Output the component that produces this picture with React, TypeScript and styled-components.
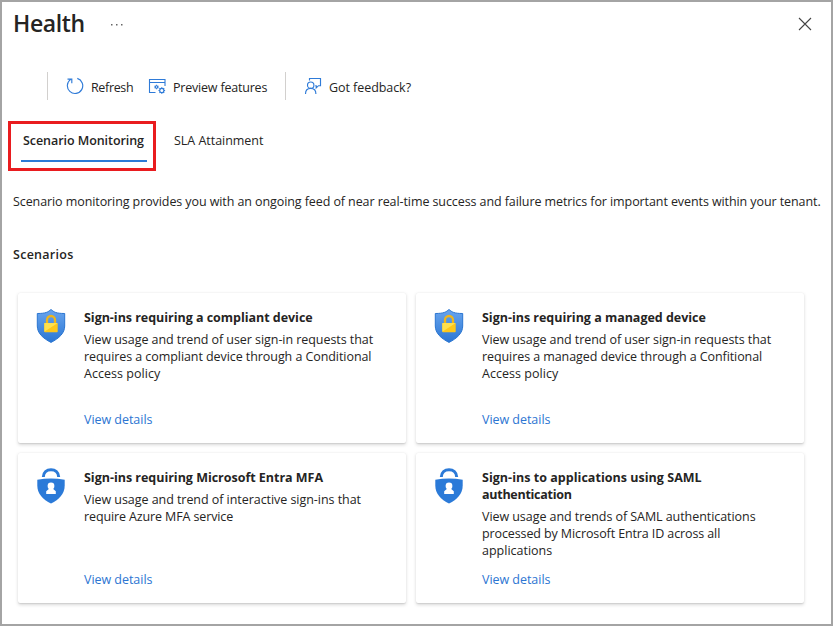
import React from "react";
import styled, { createGlobalStyle } from "styled-components";

const GlobalStyle = createGlobalStyle`
  *, *::before, *::after { box-sizing: border-box; }
  body { margin: 0; background: #fff; }
`;

const Page = styled.main`
  width: 833px;
  height: 626px;
  overflow: hidden;
  border: 2px solid #a4a4a4;
  background: #fff;
  color: #252423;
  font: 400 12.5px/17px "Open Sans", "Noto Sans", sans-serif;
`;

const Header = styled.header`
  display: flex;
  align-items: center;
  height: 44px;
  padding: 0 19px 0 11px;
`;

const PageTitle = styled.h1`
  margin: -2px 0 0;
  width: 97px;
  font-size: 23px;
  line-height: 32px;
  font-weight: 600;
  letter-spacing: -0.4px;
`;

const IconButton = styled.button<{ $end?: boolean }>`
  display: flex;
  padding: 0;
  border: 0;
  background: none;
  margin-left: ${(p) => (p.$end ? "auto" : "0")};
`;

const Toolbar = styled.div`
  display: flex;
  align-items: center;
  height: 28px;
  margin: 26px 0 0 45px;
`;

const Divider = styled.span`
  width: 1px;
  height: 28px;
  background: #d2d0ce;
`;

const ToolButton = styled.button<{ $width: number; $before: number }>`
  display: flex;
  align-items: center;
  gap: 7px;
  width: ${(p) => p.$width}px;
  margin-left: ${(p) => p.$before}px;
  padding: 0;
  border: 0;
  background: none;
  color: inherit;
  font: inherit;
  white-space: nowrap;
`;

const ToolLabel = styled.span`
  padding-top: 2px;
`;

const Tabs = styled.nav`
  display: flex;
  margin: 21px 0 0 6px;
`;

const TabHighlight = styled.div`
  width: 148px;
  height: 50px;
  padding: 8px 6px 0 10px;
  border: 3px solid #e91c1f;
`;

const Tab = styled.button<{ $active?: boolean }>`
  display: block;
  height: ${(p) => (p.$active ? "30px" : "38px")};
  width: ${(p) => (p.$active ? "126px" : "auto")};
  margin-left: ${(p) => (p.$active ? "0" : "18px")};
  padding: ${(p) => (p.$active ? "0 0 11px 2px" : "0")};
  border: 0;
  border-bottom: ${(p) => (p.$active ? "2px solid #2b7bd6" : "0")};
  background: none;
  color: inherit;
  font: inherit;
  font-weight: ${(p) => (p.$active ? 600 : 400)};
  text-align: left;
  white-space: nowrap;
`;

const Intro = styled.p`
  margin: 22px 0 0 11px;
  white-space: nowrap;
`;

const SectionTitle = styled.h2`
  margin: 36px 0 0 11px;
  font-size: 12.5px;
  line-height: 17px;
  font-weight: 600;
`;

const CardGrid = styled.section`
  display: grid;
  grid-template-columns: repeat(2, 388px);
  grid-auto-rows: 150px;
  gap: 10px;
  margin: 30px 0 0 16px;
`;

const Card = styled.article`
  display: grid;
  grid-template-columns: 66px 1fr;
  padding: 15px 0;
  border-radius: 2px;
  background: #fff;
  box-shadow: 0 1.6px 3.6px rgba(0, 0, 0, 0.15), 0 0.3px 1px rgba(0, 0, 0, 0.08);
`;

const CardIcon = styled.div`
  padding-left: 18px;
  svg { display: block; }
`;

const CardBody = styled.div`
  display: flex;
  flex-direction: column;
  padding-top: 1px;
  white-space: nowrap;
`;

const CardTitle = styled.h3`
  margin: 0 0 5px;
  font-size: 12.5px;
  line-height: 17px;
  font-weight: 700;
`;

const CardText = styled.p`
  margin: 0;
`;

const DetailsLink = styled.a`
  margin-top: auto;
  color: #2c75d2;
  letter-spacing: -0.04px;
`;

const Line = styled.span<{ $track: number }>`
  display: block;
  letter-spacing: ${(p) => p.$track}px;
`;

const RefreshIcon = () => (
  <svg width="18" height="18" viewBox="0 0 18 18" fill="none" stroke="#2f7bd8" strokeWidth="1.15">
    <path d="M11.3 1.4A7.7 7.7 0 1 1 4.7 2.4M1.5 2.1H5.8V6.3" />
  </svg>
);

const PreviewIcon = () => (
  <svg width="18" height="18" viewBox="0 0 18 18" fill="none" stroke="#2f7bd8" strokeWidth="1.1">
    <path d="M7.500 15.500H1.500V2.500H17V9M1.500 5.500H17" />
    <circle cx="8.500" cy="10" r="1.200" />
    <path d="M8.500 7.700v1.100M8.500 11.200v1.100M6.500 8.900l1 .5M9.500 10.600l1 .5M6.500 11.100l1-.5M9.500 9.400l1-.5" />
    <circle cx="13.800" cy="13.500" r="2.100" />
    <path d="M13.800 10.200v1.200M13.800 15.600v1.200M10.500 13.500h1.200M15.900 13.500h1.200M11.500 11.200l.9.9M15.300 15l.9.9M11.500 15.800l.9-.9M15.300 12l.9-.9" />
  </svg>
);

const FeedbackIcon = () => (
  <svg width="18" height="18" viewBox="0 0 18 18" fill="none" stroke="#2f7bd8" strokeWidth="1.15">
    <path d="M5.5 3.5V1.5h11v7.2h-2l-2.3 2.2V8.7h-1" />
    <circle cx="6.7" cy="8.2" r="3.2" />
    <path d="M1.5 17c0-3.4 2.2-5.6 5.2-5.6s5.2 2.2 5.2 5.6" />
  </svg>
);

const MoreIcon = () => (
  <svg width="14" height="4" viewBox="0 0 14 4" fill="#666">
    <path d="M1 2H2.500V3.500H1zM6 2H7.500V3.500H6zM11 2H12.500V3.500H11z" />
  </svg>
);

const CloseIcon = () => (
  <svg width="14" height="14" viewBox="0 0 14 14" stroke="#444" strokeWidth="1.1">
    <path d="M1 1l12 12M13 1L1 13" />
  </svg>
);

const ShieldLockIcon = ({ id }: { id: string }) => (
  <svg width="30" height="36" viewBox="0 -1 30 36">
    <defs>
      <linearGradient id={id} x2="0" y2="1">
        <stop stopColor="#69a5ee" />
        <stop offset="1" stopColor="#2a76d4" />
      </linearGradient>
    </defs>
    <path d="M15 .5c3 2.500 5 4 13.700 4v12.500c0 7-5.500 12.300-13.700 16.400C6.800 29.300 1.300 24 1.300 17V4.500C10 4.500 12 3 15 .5Z" fill={`url(#${id})`} stroke="#2b76d1" />
    <path d="M11 15v-4a4 4 0 0 1 8 0V15" fill="none" stroke="#efb51b" strokeWidth="2.300" />
    <rect x="8.300" y="14" width="13.400" height="9.200" rx=".7" fill="#fdc71a" />
    <path d="M8.300 22.700V14h13.400Z" fill="#fde04e" />
  </svg>
);

const PersonLockIcon = () => (
  <svg width="30" height="36" viewBox="0 0 30 36">
    <path d="M7.300 9C7.500 4.500 10.700 1.700 15 1.700s7.500 2.800 7.700 7.300" fill="none" stroke="#2b7ad8" strokeWidth="3" />
    <path d="M1.300 11.800Q15 9.200 28.700 11.800v5.700c0 8-5.500 14-13.700 18C6.800 31.500 1.300 25.500 1.300 17.500Z" fill="#2b7ad8" />
    <circle cx="15" cy="18" r="3.400" fill="#fff" />
    <path d="M10.200 26v-2.700l2.600-2.200v-1.600h4.400v1.600l2.600 2.200V26Z" fill="#fff" />
  </svg>
);

type TextLine = [string, number];
type Scenario = { id: string; icon: "shield" | "person"; title: TextLine[]; text: TextLine[] };

const scenarios: Scenario[] = [
  {
    id: "compliant",
    icon: "shield",
    title: [["Sign-ins requiring a compliant device", -0.03]],
    text: [
      ["View usage and trend of user sign-in requests that", -0.06],
      ["requires a compliant device through a Conditional", -0.07],
      ["Access policy", 0.04],
    ],
  },
  {
    id: "managed",
    icon: "shield",
    title: [["Sign-ins requiring a managed device", -0.02]],
    text: [
      ["View usage and trend of user sign-in requests that", -0.06],
      ["requires a managed device through a Confitional", -0.08],
      ["Access policy", 0.04],
    ],
  },
  {
    id: "mfa",
    icon: "person",
    title: [["Sign-ins requiring Microsoft Entra MFA", -0.02]],
    text: [
      ["View usage and trend of interactive sign-ins that", -0.05],
      ["require Azure MFA service", -0.12],
    ],
  },
  {
    id: "saml",
    icon: "person",
    title: [
      ["Sign-ins to applications using SAML", 0.03],
      ["authentication", -0.27],
    ],
    text: [
      ["View usage and trends of SAML authentications", -0.06],
      ["processed by Microsoft Entra ID across all", -0.11],
      ["applications", 0],
    ],
  },
];

const Lines = ({ lines }: { lines: TextLine[] }) => (
  <>
    {lines.map(([text, track]) => (
      <Line key={text} $track={track}>{text}</Line>
    ))}
  </>
);

const ScenarioCard = ({ scenario }: { scenario: Scenario }) => (
  <Card>
    <CardIcon>
      {scenario.icon === "shield" ? <ShieldLockIcon id={scenario.id} /> : <PersonLockIcon />}
    </CardIcon>
    <CardBody>
      <CardTitle><Lines lines={scenario.title} /></CardTitle>
      <CardText><Lines lines={scenario.text} /></CardText>
      <DetailsLink>View details</DetailsLink>
    </CardBody>
  </Card>
);

export default function App() {
  return (
    <>
      <GlobalStyle />
      <Page>
        <Header>
          <PageTitle>Health</PageTitle>
          <IconButton aria-label="More"><MoreIcon /></IconButton>
          <IconButton $end aria-label="Close"><CloseIcon /></IconButton>
        </Header>
        <Toolbar>
          <Divider />
          <ToolButton $before={18} $width={82}>
            <RefreshIcon /><ToolLabel><Line $track={-0.34}>Refresh</Line></ToolLabel>
          </ToolButton>
          <ToolButton $before={0} $width={137}>
            <PreviewIcon /><ToolLabel><Line $track={-0.2}>Preview features</Line></ToolLabel>
          </ToolButton>
          <Divider />
          <ToolButton $before={18} $width={110}>
            <FeedbackIcon /><ToolLabel><Line $track={-0.06}>Got feedback?</Line></ToolLabel>
          </ToolButton>
        </Toolbar>
        <Tabs>
          <TabHighlight>
            <Tab $active><Line $track={-0.06}>Scenario Monitoring</Line></Tab>
          </TabHighlight>
          <Tab><Line $track={-0.03}>SLA Attainment</Line></Tab>
        </Tabs>
        <Intro>
          <Line $track={-0.088}>
            Scenario monitoring provides you with an ongoing feed of near real-time success and failure metrics for important events within your tenant.
          </Line>
        </Intro>
        <SectionTitle><Line $track={0.28}>Scenarios</Line></SectionTitle>
        <CardGrid>
          {scenarios.map((s) => <ScenarioCard key={s.id} scenario={s} />)}
        </CardGrid>
      </Page>
    </>
  );
}
